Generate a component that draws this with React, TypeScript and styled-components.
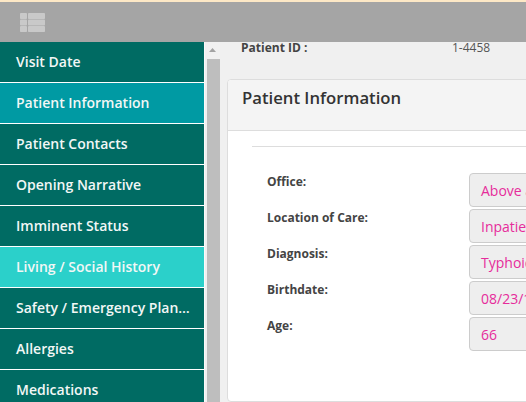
import React from "react";
import styled, { createGlobalStyle } from "styled-components";

const Global = createGlobalStyle`
  html, body {
    margin: 0;
    padding: 0;
    width: 526px;
    height: 402px;
    overflow: hidden;
    font-family: "Open Sans", "Liberation Sans", sans-serif;
  }
  * { box-sizing: border-box; }
`;

const Page = styled.div`
  display: flex;
  flex-direction: column;
  width: 526px;
  height: 402px;
  overflow: hidden;
`;

const TopStrip = styled.div`
  height: 2px;
  background: #fde8c6;
  flex-shrink: 0;
`;

const Header = styled.header`
  height: 40px;
  background: #a5a5a5;
  display: flex;
  align-items: center;
  padding-left: 20px;
  flex-shrink: 0;
`;

const Body = styled.div`
  display: flex;
  flex: 1;
  min-height: 0;
`;

const Sidebar = styled.nav`
  width: 204px;
  flex-shrink: 0;
  display: flex;
  flex-direction: column;
`;

const NavItem = styled.div<{ $tone: "dark" | "active" | "light" }>`
  height: 41px;
  flex-shrink: 0;
  line-height: 40px;
  padding: 0 14px 0 16px;
  border-bottom: 1px solid #ffffff;
  background: ${(p) =>
    p.$tone === "active" ? "#009aa3" : p.$tone === "light" ? "#2bd0ca" : "#006b63"};
  color: #f2f7f6;
  font-size: 14px;
  font-weight: 600;
  white-space: nowrap;
  overflow: hidden;
  text-overflow: ellipsis;
`;

const ScrollTrack = styled.div`
  width: 16px;
  flex-shrink: 0;
  background: #f1f1f1;
  border-left: 1px solid #fafafa;
  display: flex;
  flex-direction: column;
  align-items: center;
`;

const ScrollArrow = styled.div`
  height: 17px;
  width: 100%;
  display: flex;
  align-items: center;
  justify-content: center;
  padding-bottom: 2px;
`;

const ScrollThumb = styled.div`
  width: 13px;
  flex: 1;
  background: #bebebe;
  margin-left: 1px;
`;

const Main = styled.main`
  flex: 1;
  min-width: 0;
  background: #f0f0f0;
  overflow: hidden;
  display: flex;
  flex-direction: column;
`;

const IdRow = styled.div`
  display: grid;
  grid-template-columns: 211px auto;
  margin-top: -2px;
  padding-left: 21px;
  font-size: 12px;
  line-height: 16px;
  color: #444;
`;

const IdLabel = styled.span`
  font-weight: 700;
`;

const IdValue = styled.span`
  color: #555;
`;

const Card = styled.section`
  margin: 23px 0 0 7px;
  width: 420px;
  flex-shrink: 0;
  border: 1px solid #dddddd;
  border-radius: 4px;
  background: #ffffff;
  overflow: hidden;
  flex: 1;
`;

const CardHeader = styled.div`
  background: #f4f4f4;
  border-bottom: 1px solid #dddddd;
  padding: 7px 14px 21px;
  font-size: 16.7px;
  line-height: 22px;
  font-weight: 600;
  color: #333;
`;

const CardBody = styled.div`
  padding: 15px 0 0 24px;
`;

const Divider = styled.div`
  height: 1px;
  background: #dddddd;
  margin-bottom: 26px;
`;

const Form = styled.div`
  display: grid;
  grid-template-columns: 202px 220px;
  padding-left: 15px;
`;

const Label = styled.div`
  font-size: 12px;
  line-height: 17px;
  font-weight: 700;
  color: #444;
  height: 36px;
`;

const Field = styled.div`
  height: 34px;
  margin-bottom: 2px;
  background: #eeeeee;
  border: 1px solid #cccccc;
  border-radius: 4px;
  padding-left: 11px;
  display: flex;
  align-items: center;
  font-size: 14px;
  color: #e62c9b;
  white-space: nowrap;
  overflow: hidden;
`;

const ListIcon = () => (
  <svg width="25" height="19" viewBox="0 0 25 19">
    {[0, 6.5, 13].map((y) => (
      <g key={y} fill="#c9c9c9">
        <rect x="0" y={y} width="7" height="6" rx="0.8" />
        <rect x="8" y={y} width="17" height="6" rx="0.8" />
      </g>
    ))}
  </svg>
);

const navItems: { label: string; tone: "dark" | "active" | "light" }[] = [
  { label: "Visit Date", tone: "dark" },
  { label: "Patient Information", tone: "active" },
  { label: "Patient Contacts", tone: "dark" },
  { label: "Opening Narrative", tone: "dark" },
  { label: "Imminent Status", tone: "dark" },
  { label: "Living / Social History", tone: "light" },
  { label: "Safety / Emergency Planning", tone: "dark" },
  { label: "Allergies", tone: "dark" },
  { label: "Medications", tone: "dark" },
];

const fields = [
  { label: "Office:", value: "Above and Beyond Hospice" },
  { label: "Location of Care:", value: "Inpatient Facility" },
  { label: "Diagnosis:", value: "Typhoid Fever" },
  { label: "Birthdate:", value: "08/23/1957" },
  { label: "Age:", value: "66" },
];

export default function App() {
  return (
    <Page>
      <Global />
      <TopStrip />
      <Header>
        <ListIcon />
      </Header>
      <Body>
        <Sidebar>
          {navItems.map((n) => (
            <NavItem key={n.label} $tone={n.tone}>
              {n.label}
            </NavItem>
          ))}
        </Sidebar>
        <ScrollTrack>
          <ScrollArrow>
            <svg width="7" height="4" viewBox="0 0 7 4">
              <path d="M0 4 L3.5 0 L7 4 Z" fill="#a3a3a3" />
            </svg>
          </ScrollArrow>
          <ScrollThumb />
        </ScrollTrack>
        <Main>
          <IdRow>
            <IdLabel>Patient ID :</IdLabel>
            <IdValue>1-4458</IdValue>
          </IdRow>
          <Card>
            <CardHeader>Patient Information</CardHeader>
            <CardBody>
              <Divider />
              <Form>
                {fields.map((f) => (
                  <React.Fragment key={f.label}>
                    <Label>{f.label}</Label>
                    <Field>{f.value}</Field>
                  </React.Fragment>
                ))}
              </Form>
            </CardBody>
          </Card>
        </Main>
      </Body>
    </Page>
  );
}
